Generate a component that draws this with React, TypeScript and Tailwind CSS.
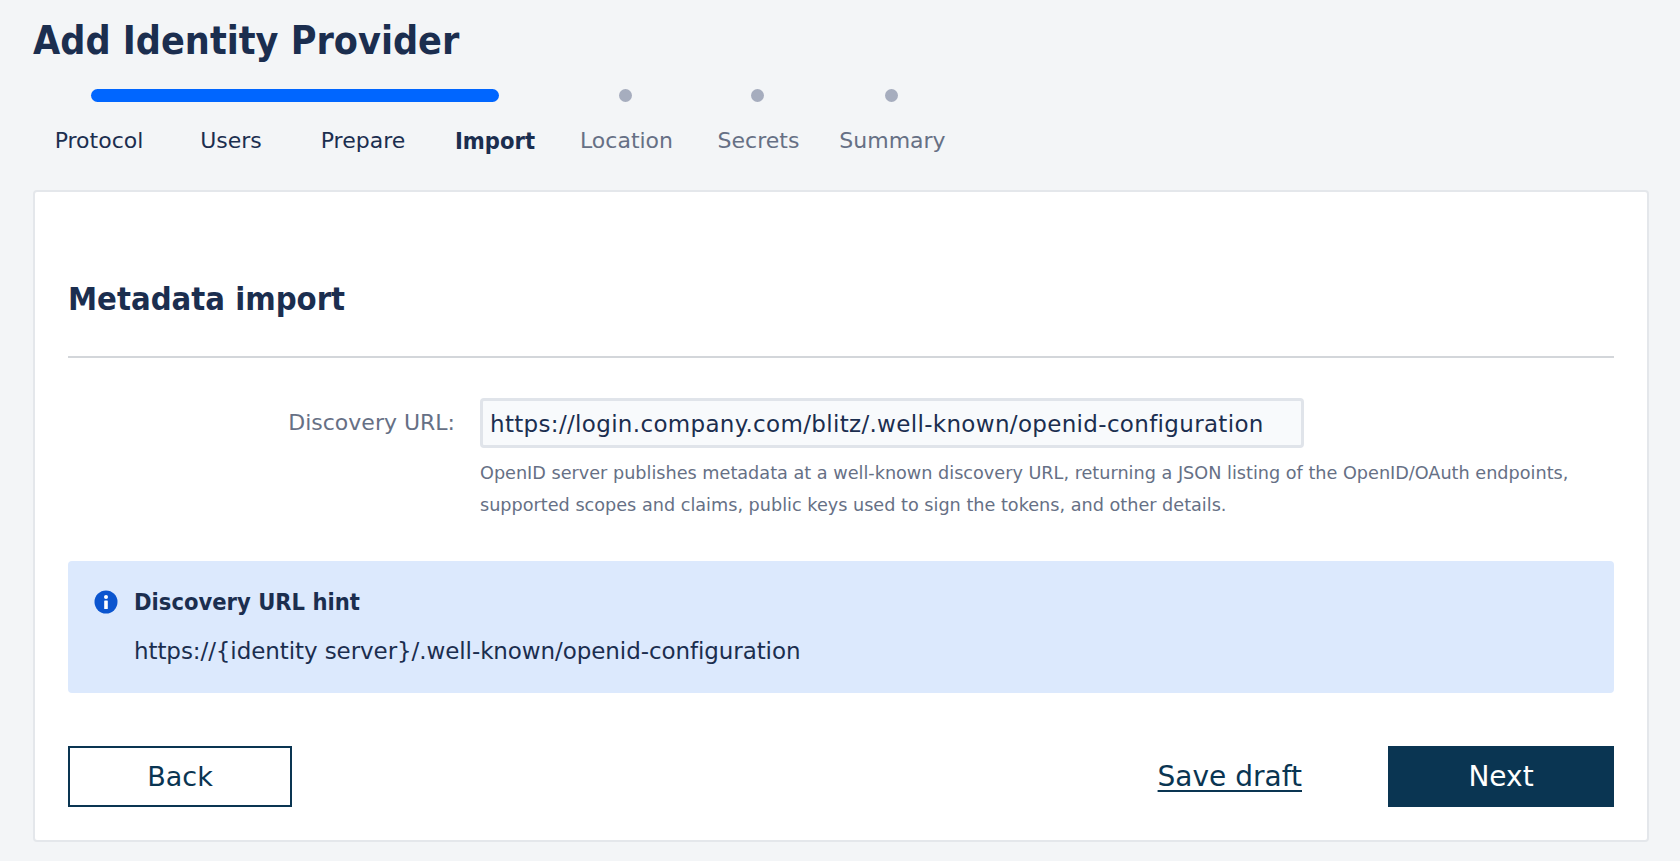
const font = { fontFamily: '"DejaVu Sans", sans-serif' };
const condensed = { fontFamily: '"DejaVu Sans Condensed", "DejaVu Sans", sans-serif' };

const steps = [
  { label: "Protocol", state: "done" },
  { label: "Users", state: "done" },
  { label: "Prepare", state: "done" },
  { label: "Import", state: "current" },
  { label: "Location", state: "todo" },
  { label: "Secrets", state: "todo" },
  { label: "Summary", state: "todo" },
];

function Stepper() {
  return (
    <div className="mt-[23px] ml-[33px] w-[924px]">
      {/* Track */}
      <div className="grid h-[13px] grid-cols-[132px_132px_132px_132px_128px_136px_132px] items-center">
        <div className="col-span-4 mr-[62px] ml-[58px] h-[13px] rounded-full bg-[#0066ff]" />
        {steps.slice(4).map((s) => (
          <div key={s.label} className="flex justify-center">
            <div className="h-[13px] w-[13px] rounded-full bg-[#a6adbe]" />
          </div>
        ))}
      </div>
      {/* Labels */}
      <div className="mt-[26px] grid grid-cols-[132px_132px_132px_132px_128px_136px_132px]">
        {steps.map((s) => (
          <div
            key={s.label}
            style={s.state === "current" ? condensed : undefined}
            className={`text-center leading-[26px] whitespace-nowrap ${
              s.state === "todo" ? "pl-[3px] text-[#667085]" : "text-[#1b2e4f]"
            } ${s.state === "current" ? "text-[23.5px] font-bold" : "text-[22px]"}`}
          >
            {s.label}
          </div>
        ))}
      </div>
    </div>
  );
}

export default function App() {
  return (
    <div style={font} className="h-[861px] w-[1680px] overflow-hidden bg-[#f3f5f7] pt-[16px]">
      <h1 style={condensed} className="ml-[33px] text-[39.1px] leading-[50px] font-bold text-[#1b2e4f]">
        Add Identity Provider
      </h1>
      <Stepper />

      <div className="mt-[36px] mr-[31px] ml-[33px] h-[652px] rounded-[4px] border-2 border-[#e4e7eb] bg-white px-[33px] pt-[87px]">
        <h2 style={condensed} className="text-[32.5px] leading-[40px] font-bold text-[#1b2e4f]">
          Metadata import
        </h2>
        <div className="mt-[37px] h-[2px] bg-[#d3d6da]" />

        {/* Discovery URL field */}
        <div className="mt-[40px] flex">
          <label className="w-[412px] pt-[11px] pr-[25px] text-right text-[22px] leading-[28px] text-[#667085]">
            Discovery URL:
          </label>
          <div className="w-[824px]">
            <div className="h-[50px] rounded-[4px] border-[3px] border-[#e0e4ea] bg-[#f8fafc] pt-[1px] pl-[7px] text-[23px] leading-[44px] tracking-[0.33px] whitespace-nowrap text-[#1b2e4f]">
              https://login.company.com/blitz/.well-known/openid-configuration
            </div>
          </div>
        </div>
        <p className="mt-[9px] ml-[412px] text-[17.65px] leading-[32px] whitespace-nowrap text-[#667085]">
          OpenID server publishes metadata at a well-known discovery URL, returning a JSON listing of the OpenID/OAuth endpoints,
          <br />
          supported scopes and claims, public keys used to sign the tokens, and other details.
        </p>

        {/* Hint */}
        <div className="mt-[40px] h-[132px] rounded-[4px] bg-[#dce9fd] pt-[27px] pl-[26px]">
          <div className="flex items-center">
            <svg width="24" height="24" viewBox="0 0 24 24" className="shrink-0">
              <circle cx="12" cy="12" r="11.5" fill="#0b55cf" />
              <circle cx="12" cy="7" r="2" fill="#fff" />
              <rect x="10.2" y="10.5" width="3.6" height="8.5" rx="0.6" fill="#fff" />
            </svg>
            <span style={condensed} className="ml-[16px] text-[23.5px] leading-[28px] font-bold text-[#1b2e4f]">
              Discovery URL hint
            </span>
          </div>
          <div className="mt-[21px] ml-[40px] text-[23px] leading-[28px] tracking-[-0.08px] text-[#1b2e4f]">
            https://{"{identity server}"}/.well-known/openid-configuration
          </div>
        </div>

        {/* Actions */}
        <div className="mt-[53px] flex items-center">
          <button className="h-[61px] w-[224px] border-2 border-[#0a3552] bg-white pt-[1px] text-[27px] text-[#0a3552]">Back</button>
          <a className="mt-[1px] mr-[86px] ml-auto text-[28px] text-[#0a3552] underline underline-offset-4">Save draft</a>
          <button className="h-[61px] w-[226px] bg-[#0a3552] pt-[1px] text-[28px] text-white">Next</button>
        </div>
      </div>
    </div>
  );
}
